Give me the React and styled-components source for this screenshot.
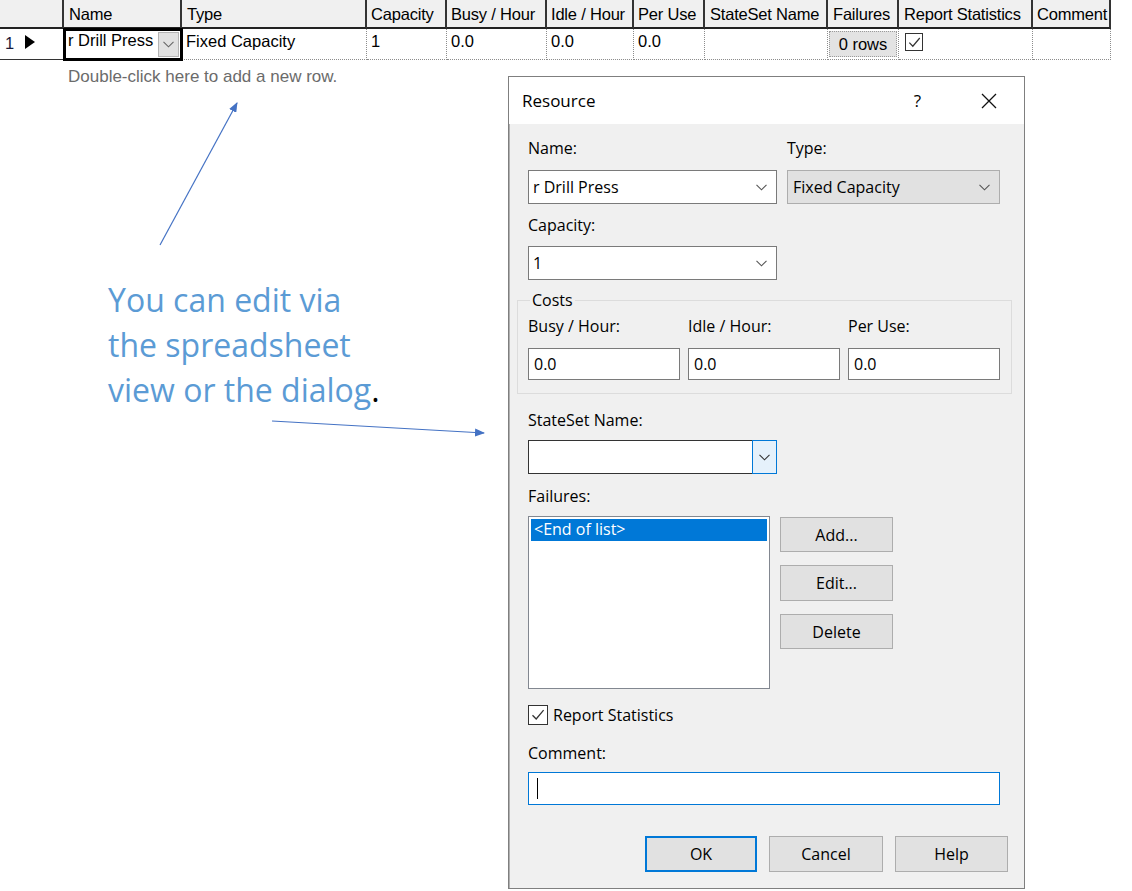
import React from 'react';
import styled, { createGlobalStyle } from 'styled-components';

const Global = createGlobalStyle`
  html, body { margin: 0; padding: 0; background: #fff; }
  body { font-family: "Liberation Sans", Arial, sans-serif; }
  * { box-sizing: border-box; }
`;

const Page = styled.div`
  position: relative;
  width: 1132px;
  height: 891px;
  overflow: hidden;
  background: #fff;
`;

/* ---------- spreadsheet ---------- */
const Sheet = styled.div`
  display: grid;
  grid-template-columns: 64px 118px 185px 80px 100px 87px 71px 123px 71px 134px 78px;
  width: 1111px;
  font-family: "Liberation Sans", Arial, sans-serif;
  font-size: 16.5px;
  color: #000;
`;

const HeadCell = styled.div`
  height: 29px;
  background: #f0f0f0;
  border-right: 2px solid #333;
  border-bottom: 2px solid #222;
  padding: 4px 0 0 ${p => (p.$pad ?? 5)}px;
  line-height: 20px;
  letter-spacing: -0.2px;
  white-space: nowrap;
  overflow: hidden;
`;

const Cell = styled.div`
  height: 31px;
  border-right: 1px dotted #8c8c8c;
  border-bottom: 1px dotted #8c8c8c;
  padding: 2px 0 0 4px;
  line-height: 20px;
  white-space: nowrap;
  overflow: hidden;
  display: flex;
  align-items: flex-start;
`;

const RowHeadCell = styled(Cell)`
  border-right: none;
  border-bottom: 1px solid #333;
  padding: 4px 0 0 5px;
  gap: 11px;
  color: #1a1a3a;
`;

const EditCell = styled(Cell)`
  border: none;
  box-shadow: inset 0 0 0 2px #000, 0 0 0 1px #000;
  background: #fff;
  padding: 1px 3px 0 4px;
  align-items: flex-start;
  justify-content: space-between;
  position: relative;
  z-index: 1;
`;

const CellDrop = styled.div`
  width: 21px;
  height: 25px;
  margin-top: 2px;
  background: #e1e1e1;
  border: 1px solid #b4b4b4;
  display: flex;
  align-items: center;
  justify-content: center;
`;

const ButtonCell = styled(Cell)`
  padding: 1px 1px 0 1px;
`;

const RowsButton = styled.div`
  width: 68px;
  height: 26px;
  margin-top: 1px;
  background: #e3e3e3;
  border: 1px dotted #9a9a9a;
  display: flex;
  align-items: center;
  justify-content: center;
  font-size: 16.5px;
`;

const CheckCell = styled(Cell)`
  padding: 4px 0 0 6px;
`;

const TableCheck = styled.div`
  width: 18px;
  height: 18px;
  border: 1px solid #333;
  background: #fff;
  display: flex;
  align-items: center;
  justify-content: center;
`;

/* ---------- lower area ---------- */
const Lower = styled.div`
  display: flex;
  align-items: flex-start;
`;

const LeftCol = styled.div`
  width: 508px;
  flex: none;
  display: flex;
  flex-direction: column;
`;

const Hint = styled.div`
  margin-top: 7px;
  padding-left: 68px;
  font-family: "Liberation Sans", Arial, sans-serif;
  font-size: 17px;
  line-height: 20px;
  color: #6b6b6b;
`;

const Annotation = styled.div`
  margin-top: 190px;
  padding-left: 108px;
  font-family: "Open Sans", "Noto Sans", sans-serif;
  font-size: 32px;
  line-height: 45px;
  color: #5b9bd5;
`;

const Dot = styled.span`
  color: #000;
`;

/* ---------- dialog ---------- */
const Dialog = styled.div`
  margin-top: 16px;
  width: 517px;
  border: 1px solid #7f7f7f;
  box-shadow: inset 1px 1px 0 #b0b0b0;
  background: #f0f0f0;
  font-family: "Open Sans", "Noto Sans", sans-serif;
  font-size: 16px;
  color: #000;
  display: flex;
  flex-direction: column;
`;

const TitleBar = styled.div`
  height: 47px;
  background: #fff;
  display: flex;
  align-items: center;
  padding: 0 27px 0 13px;
`;

const Title = styled.div`
  flex: 1;
  font-size: 17px;
  line-height: 20px;
`;

const Help = styled.div`
  font-size: 17px;
  line-height: 20px;
  margin-right: 60px;
`;

const Body = styled.div`
  padding: 14px 24px 16px 19px;
  display: flex;
  flex-direction: column;
`;

const Label = styled.div`
  line-height: 20px;
  height: 20px;
  margin-top: ${p => p.$mt || 0}px;
  white-space: nowrap;
`;

const TwoCols = styled.div`
  display: grid;
  grid-template-columns: 249px 213px;
  column-gap: 10px;
  margin-top: ${p => p.$mt || 0}px;
`;

const Combo = styled.div`
  height: 34px;
  width: ${p => (p.$w ? `${p.$w}px` : 'auto')};
  margin-top: ${p => p.$mt || 0}px;
  background: ${p => (p.$grey ? '#e1e1e1' : '#fff')};
  border: 1px solid ${p => (p.$grey ? '#adadad' : '#7a7a7a')};
  display: flex;
  align-items: center;
  padding: 0 9px 0 ${p => (p.$grey ? 5 : 4)}px;
  line-height: 20px;
`;

const ComboText = styled.div`
  flex: 1;
  white-space: nowrap;
`;

const SplitCombo = styled.div`
  width: 249px;
  height: 34px;
  margin-top: ${p => p.$mt || 0}px;
  display: flex;
`;

const SplitText = styled.div`
  flex: 1;
  background: #fff;
  border: 1px solid #333;
  border-right: none;
`;

const SplitButton = styled.div`
  width: 25px;
  background: #e5f1fb;
  border: 1px solid #0078d7;
  display: flex;
  align-items: center;
  justify-content: center;
`;

const Group = styled.fieldset`
  margin: 10px -12px 0 -11px;
  padding: 6px 11px 13px 10px;
  border: 1px solid #dcdcdc;
  min-width: 0;
`;

const Legend = styled.legend`
  padding: 0 2px;
  margin-left: 2px;
  line-height: 20px;
`;

const ThreeCols = styled.div`
  display: grid;
  grid-template-columns: repeat(3, 152px);
  column-gap: 8px;
  row-gap: 12px;
`;

const TextBox = styled.div`
  height: ${p => p.$h || 32}px;
  margin-top: ${p => p.$mt || 0}px;
  background: #fff;
  border: 1px solid ${p => (p.$focus ? '#0078d7' : '#7a7a7a')};
  padding: 0 5px;
  display: flex;
  align-items: center;
  line-height: 20px;
`;

const Caret = styled.div`
  width: 1px;
  height: 21px;
  background: #000;
  margin-left: 3px;
`;

const ListRow = styled.div`
  display: flex;
  gap: 10px;
  margin-top: 10px;
`;

const ListBox = styled.div`
  width: 242px;
  height: 173px;
  background: #fff;
  border: 1px solid #828790;
  padding: 2px;
`;

const ListItem = styled.div`
  height: 22px;
  line-height: 20px;
  background: ${p => (p.$selected ? '#0078d7' : 'transparent')};
  color: ${p => (p.$selected ? '#fff' : '#000')};
  padding: 0 3px;
`;

const SideButtons = styled.div`
  display: flex;
  flex-direction: column;
  gap: 13px;
  margin-top: 1px;
`;

const Button = styled.div`
  width: ${p => p.$w || 113}px;
  height: ${p => p.$h || 35}px;
  background: #e1e1e1;
  border: ${p => (p.$default ? '2px solid #0078d7' : '1px solid #adadad')};
  display: flex;
  align-items: center;
  justify-content: center;
  line-height: 20px;
`;

const CheckRow = styled.div`
  display: flex;
  align-items: center;
  gap: 5px;
  margin-top: 16px;
  height: 20px;
`;

const CheckBox = styled.div`
  width: 20px;
  height: 20px;
  border: 1px solid #333;
  background: #fff;
  display: flex;
  align-items: center;
  justify-content: center;
`;

const Footer = styled.div`
  display: flex;
  justify-content: flex-end;
  gap: 12px;
  margin: 31px -8px 0 0;
`;

const Overlay = styled.svg`
  position: absolute;
  left: 0;
  top: 0;
  pointer-events: none;
`;

const Chevron = ({ color = '#555' }) => (
  <svg width="11" height="7" viewBox="0 0 11 7">
    <path d="M0.5 0.8 L5.5 5.8 L10.5 0.8" fill="none" stroke={color} strokeWidth="1.1" />
  </svg>
);

const Check = ({ size = 16 }) => (
  <svg width={size} height={size} viewBox="0 0 16 16">
    <path d="M2.5 8.2 L6.2 12 L13.6 3.2" fill="none" stroke="#333" strokeWidth="1.3" />
  </svg>
);

const headers = ['Name', 'Type', 'Capacity', 'Busy / Hour', 'Idle / Hour', 'Per Use', 'StateSet Name', 'Failures', 'Report Statistics', 'Comment'];
const narrowPad = ['Capacity', 'Busy / Hour', 'Idle / Hour', 'Per Use', 'Comment'];

export default function App() {
  return (
    <>
      <Global />
      <Page>
        <Sheet>
          <HeadCell />
          {headers.map(h => (
            <HeadCell key={h} $pad={narrowPad.includes(h) ? 4 : 5}>{h}</HeadCell>
          ))}
          <RowHeadCell>
            <span>1</span>
            <svg width="10" height="14" viewBox="0 0 10 14" style={{ marginTop: 2 }}>
              <polygon points="0,0 10,7 0,14" fill="#000" />
            </svg>
          </RowHeadCell>
          <EditCell>
            <span>r Drill Press</span>
            <CellDrop><Chevron color="#666" /></CellDrop>
          </EditCell>
          <Cell>Fixed Capacity</Cell>
          <Cell>1</Cell>
          <Cell>0.0</Cell>
          <Cell>0.0</Cell>
          <Cell>0.0</Cell>
          <Cell />
          <ButtonCell><RowsButton>0 rows</RowsButton></ButtonCell>
          <CheckCell><TableCheck><Check size={15} /></TableCheck></CheckCell>
          <Cell />
        </Sheet>

        <Lower>
          <LeftCol>
            <Hint>Double-click here to add a new row.</Hint>
            <Annotation>
              You can edit via<br />
              the spreadsheet<br />
              view or the dialog<Dot>.</Dot>
            </Annotation>
          </LeftCol>

          <Dialog>
            <TitleBar>
              <Title>Resource</Title>
              <Help>?</Help>
              <svg width="16" height="16" viewBox="0 0 16 16">
                <path d="M1 1 L15 15 M15 1 L1 15" stroke="#111" strokeWidth="1.3" />
              </svg>
            </TitleBar>
            <Body>
              <TwoCols>
                <Label>Name:</Label>
                <Label>Type:</Label>
              </TwoCols>
              <TwoCols $mt={12}>
                <Combo>
                  <ComboText>r Drill Press</ComboText>
                  <Chevron />
                </Combo>
                <Combo $grey>
                  <ComboText>Fixed Capacity</ComboText>
                  <Chevron />
                </Combo>
              </TwoCols>

              <Label $mt={11}>Capacity:</Label>
              <Combo $w={249} $mt={11}>
                <ComboText>1</ComboText>
                <Chevron />
              </Combo>

              <Group>
                <Legend>Costs</Legend>
                <ThreeCols>
                  <Label>Busy / Hour:</Label>
                  <Label>Idle / Hour:</Label>
                  <Label>Per Use:</Label>
                  <TextBox>0.0</TextBox>
                  <TextBox>0.0</TextBox>
                  <TextBox>0.0</TextBox>
                </ThreeCols>
              </Group>

              <Label $mt={16}>StateSet Name:</Label>
              <SplitCombo $mt={10}>
                <SplitText />
                <SplitButton><Chevron color="#333" /></SplitButton>
              </SplitCombo>

              <Label $mt={12}>Failures:</Label>
              <ListRow>
                <ListBox>
                  <ListItem $selected>&lt;End of list&gt;</ListItem>
                </ListBox>
                <SideButtons>
                  <Button>Add...</Button>
                  <Button $h={36}>Edit...</Button>
                  <Button>Delete</Button>
                </SideButtons>
              </ListRow>

              <CheckRow>
                <CheckBox><Check size={16} /></CheckBox>
                <span>Report Statistics</span>
              </CheckRow>

              <Label $mt={18}>Comment:</Label>
              <TextBox $focus $h={33} $mt={9}><Caret /></TextBox>

              <Footer>
                <Button $default $w={112} $h={36}>OK</Button>
                <Button $w={114} $h={36}>Cancel</Button>
                <Button $w={113} $h={36}>Help</Button>
              </Footer>
            </Body>
          </Dialog>
        </Lower>

        <Overlay width="1132" height="891" viewBox="0 0 1132 891">
          <defs>
            <marker id="ah" markerWidth="10" markerHeight="8" refX="9" refY="4" orient="auto" markerUnits="userSpaceOnUse">
              <polygon points="0,0 10,4 0,8" fill="#4472c4" />
            </marker>
          </defs>
          <line x1="160" y1="245" x2="237" y2="103" stroke="#4472c4" strokeWidth="1.2" markerEnd="url(#ah)" />
          <line x1="272" y1="421" x2="484" y2="433" stroke="#4472c4" strokeWidth="1.2" markerEnd="url(#ah)" />
        </Overlay>
      </Page>
    </>
  );
}
